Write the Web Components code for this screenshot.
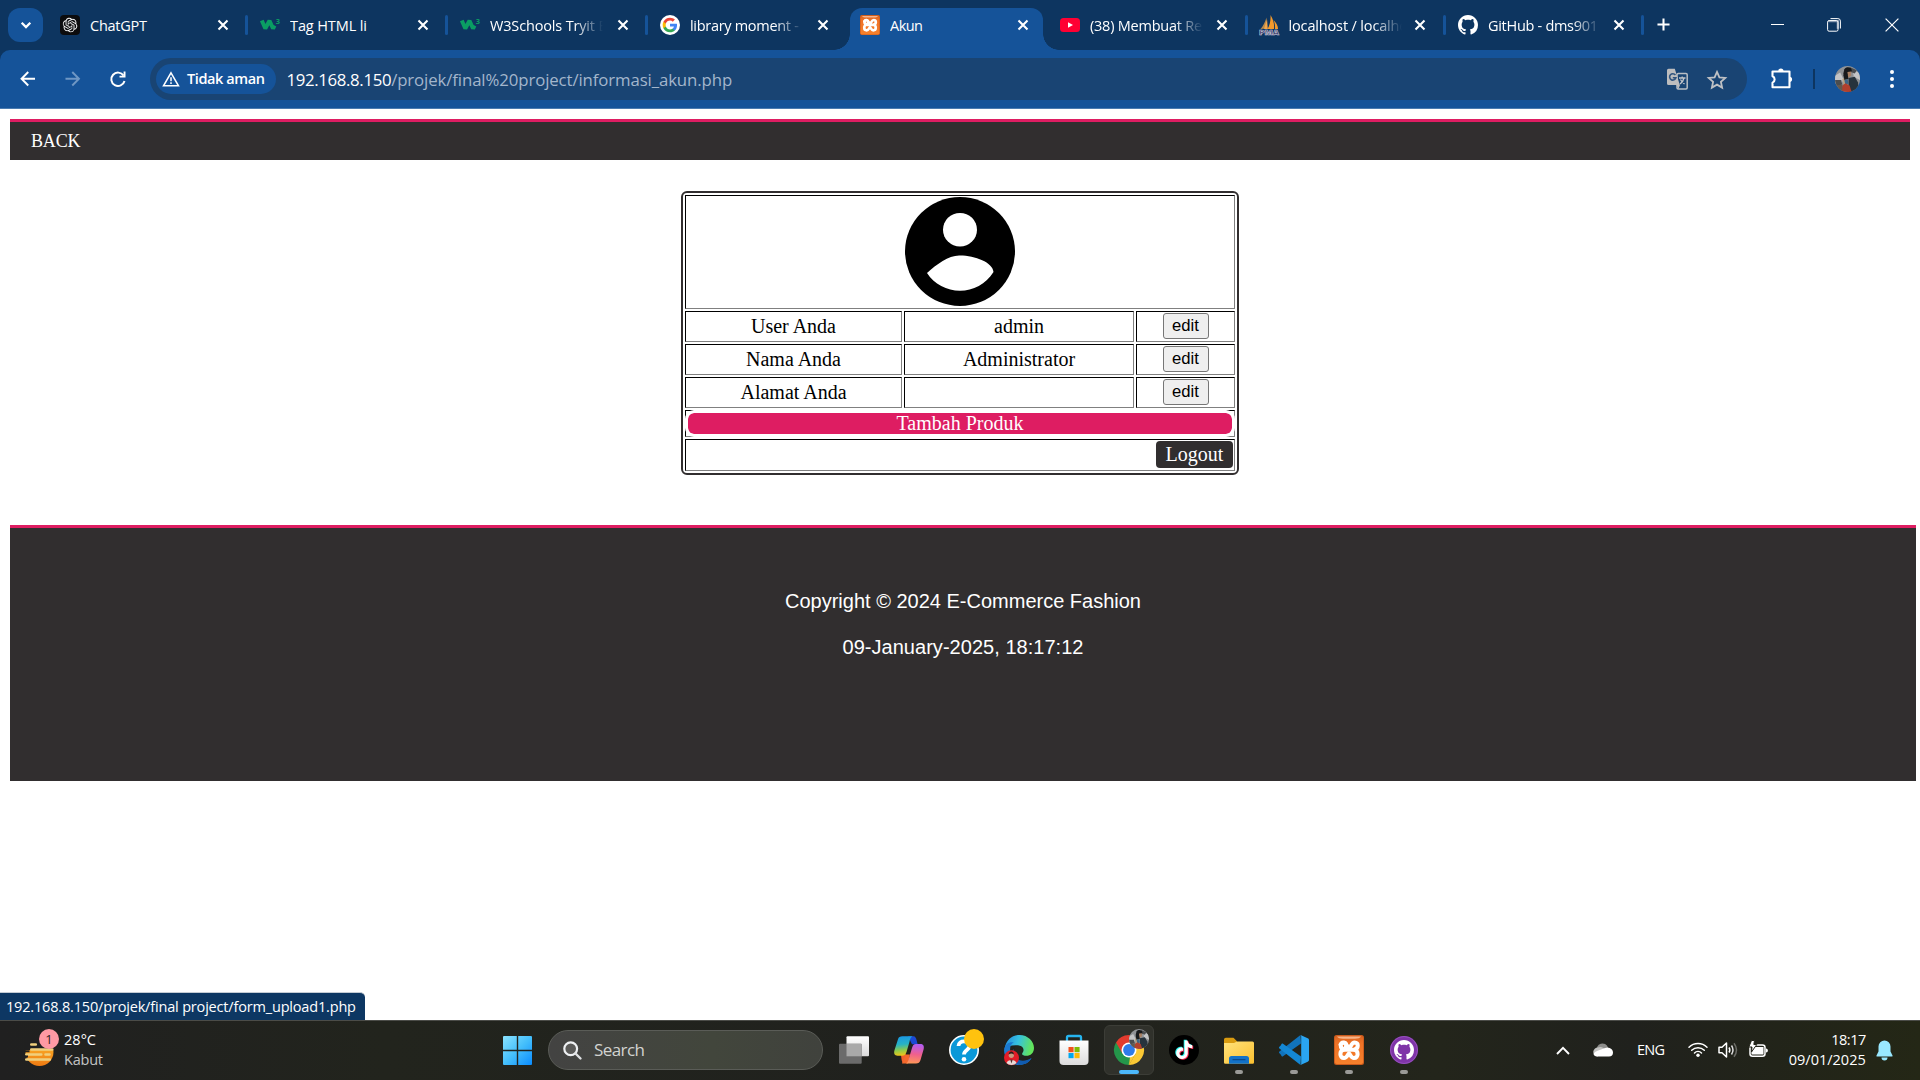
<!DOCTYPE html>
<html lang="id">
<head>
<meta charset="utf-8">
<title>Akun</title>
<style>
html,body{margin:0;height:100%;overflow:hidden;background:#fff}
body{font-family:"Open Sans","Noto Sans",sans-serif}
</style>
</head>
<body>
<desktop-screen></desktop-screen>
<script>
const GH='M8 0C3.58 0 0 3.58 0 8c0 3.54 2.29 6.53 5.47 7.59.4.07.55-.17.55-.38 0-.19-.01-.82-.01-1.49-2.01.37-2.53-.49-2.69-.94-.09-.23-.48-.94-.82-1.13-.28-.15-.68-.52-.01-.53.63-.01 1.08.58 1.23.82.72 1.21 1.87.87 2.33.66.07-.52.28-.87.51-1.07-1.78-.2-3.64-.89-3.64-3.95 0-.87.31-1.59.82-2.15-.08-.2-.36-1.02.08-2.12 0 0 .67-.21 2.2.82.64-.18 1.32-.27 2-.27s1.36.09 2 .27c1.53-1.04 2.2-.82 2.2-.82.44 1.1.16 1.92.08 2.12.51.56.82 1.27.82 2.15 0 3.07-1.87 3.75-3.65 3.95.29.25.54.73.54 1.48 0 1.07-.01 1.93-.01 2.2 0 .21.15.46.55.38A8.01 8.01 0 0016 8c0-4.42-3.58-8-8-8z';
const TT='M12.525.02c1.31-.02 2.61-.01 3.91-.02.08 1.53.63 3.09 1.75 4.17 1.12 1.11 2.7 1.62 4.24 1.79v4.03c-1.44-.05-2.89-.35-4.2-.97-.57-.26-1.1-.59-1.62-.93-.01 2.92.01 5.84-.02 8.75-.08 1.4-.54 2.79-1.35 3.94-1.31 1.92-3.58 3.17-5.91 3.21-1.43.08-2.86-.31-4.08-1.03-2.02-1.19-3.44-3.37-3.65-5.71-.02-.5-.03-1-.01-1.49.18-1.9 1.12-3.72 2.58-4.96 1.66-1.44 3.98-2.13 6.15-1.72.02 1.48-.04 2.96-.04 4.44-.99-.32-2.15-.23-3.02.37-.63.41-1.11 1.04-1.36 1.75-.21.51-.15 1.07-.14 1.61.24 1.64 1.82 3.02 3.5 2.87 1.12-.01 2.19-.66 2.77-1.61.19-.33.4-.67.41-1.06.1-1.79.06-3.57.07-5.36.01-4.03-.01-8.05.02-12.07z';
const OA='M22.2819 9.8211a5.9847 5.9847 0 0 0-.5157-4.9108 6.0462 6.0462 0 0 0-6.5098-2.9A6.0651 6.0651 0 0 0 4.9807 4.1818a5.9847 5.9847 0 0 0-3.9977 2.9 6.0462 6.0462 0 0 0 .7427 7.0966 5.98 5.98 0 0 0 .511 4.9107 6.051 6.051 0 0 0 6.5146 2.9001A5.9847 5.9847 0 0 0 13.2599 24a6.0557 6.0557 0 0 0 5.7718-4.2058 5.9894 5.9894 0 0 0 3.9977-2.9001 6.0557 6.0557 0 0 0-.7475-7.0729zm-9.022 12.6081a4.4755 4.4755 0 0 1-2.8764-1.0408l.1419-.0804 4.7783-2.7582a.7948.7948 0 0 0 .3927-.6813v-6.7369l2.02 1.1686a.071.071 0 0 1 .038.052v5.5826a4.504 4.504 0 0 1-4.4945 4.4944zm-9.6607-4.1254a4.4708 4.4708 0 0 1-.5346-3.0137l.142.0852 4.783 2.7582a.7712.7712 0 0 0 .7806 0l5.8428-3.3685v2.3324a.0804.0804 0 0 1-.0332.0615L9.74 19.9502a4.4992 4.4992 0 0 1-6.1408-1.6464zM2.3408 7.8956a4.485 4.485 0 0 1 2.3655-1.9728V11.6a.7664.7664 0 0 0 .3879.6765l5.8144 3.3543-2.0201 1.1685a.0757.0757 0 0 1-.071 0l-4.8303-2.7865A4.504 4.504 0 0 1 2.3408 7.872zm16.5963 3.8558L13.1038 8.364 15.1192 7.2a.0757.0757 0 0 1 .071 0l4.8303 2.7913a4.4944 4.4944 0 0 1-.6765 8.1042v-5.6772a.79.79 0 0 0-.407-.667zm2.0107-3.0231l-.142-.0852-4.7735-2.7818a.7759.7759 0 0 0-.7854 0L9.409 9.2297V6.8974a.0662.0662 0 0 1 .0284-.0615l4.8303-2.7866a4.4992 4.4992 0 0 1 6.6802 4.66zM8.3065 12.863l-2.02-1.1638a.0804.0804 0 0 1-.038-.0567V6.0742a4.4992 4.4992 0 0 1 7.3757-3.4537l-.142.0805L8.704 5.459a.7948.7948 0 0 0-.3927.6813zm1.0976-2.3654l2.602-1.4998 2.6069 1.4998v2.9994l-2.5974 1.4997-2.6067-1.4997Z';
const XAMPP=`<defs><linearGradient id="x" x2="0" y2="1"><stop offset="0" stop-color="#d9631f"/><stop offset=".25" stop-color="#ef7226"/><stop offset="1" stop-color="#f6812c"/></linearGradient></defs><rect width="30" height="30" rx="2.5" fill="#c95a1c"/><rect x=".9" y=".9" width="28.2" height="28.2" rx="2" fill="url(#x)"/><path d="M3 1.5h24c-1 1.600-3 2.200-6 2.200H9c-3 0-5-.6-6-2.200z" fill="#f6b48a"/><g fill="none" stroke="#fff" stroke-width="4" stroke-linecap="round" stroke-linejoin="round"><path d="M6.500 9.500C9 6.600 12.200 7.500 12.200 10.500c0 2.200-1.300 3.200-2.700 4.200-4 1-4.500 8.300.6 8.300 2.700 0 2.900-2.500 4.900-4.700 2 2.200 2.200 4.700 4.900 4.700 5.100 0 4.600-7.300.6-8.300"/><path d="M10 14.700C5.500 13 6 7.300 9.500 7.500c3.200 0 3.700 5.300 5.500 5.300s2.300-5.300 5.500-5.300c4.500.2 4.200 5.800 0 7.200z"/></g>`;
const face=`<clipPath id="f"><circle cx="12" cy="12" r="12"/></clipPath><g clip-path="url(#f)"><rect width="24" height="24" fill="#8f9296"/><path d="M0 9l5-3 3 6-2 5-6 1zM17 3l7 4v6l-6-3z" fill="#c3c4c6"/><path d="M0 13h6l1 4-7 2zM14 1l7 3-2 3-5-2z" fill="#4a4d50"/><path d="M13 11l6-1 3 5 1 6-5 3h-5z" fill="#26333d"/><path d="M7 12l4-2 1 6-3 4z" fill="#b9a27f"/><path d="M9 3c2-3 7-2 7 1l-1 3-6 4-1-4z" fill="#17191c"/><path d="M12 5.500l3.500-.5v4L12 11z" fill="#a98063"/><path d="M8 8l4-1 1 5-4 1z" fill="#171a1d"/><path d="M9 13l3-1 1 4-3 2z" fill="#3a6688"/><path d="M7 18l3-2 4 2 2 6H6z" fill="#b0402d"/><path d="M1 18l6-1v7H2z" fill="#65594d"/></g>`;
/* name: [viewBox, markup] */
const ICONS={
down:['0 0 12 8','<path d="M1.700 1.700L6 6l4.300-4.300" fill="none" stroke="#fff" stroke-width="2.300"/>'],
close:['0 0 12 12','<path d="M1.500 1.500l9 9M10.500 1.500l-9 9" stroke="#fff" stroke-width="2.100"/>'],
gpt:['0 0 20 20',`<rect width="20" height="20" rx="4" fill="#0c0c0d"/><path transform="translate(2.700 2.700) scale(.61)" fill="#f5f5f5" d="${OA}"/>`],
w3:['0 0 20 20','<path d="M1.800 5.500l3.500 8 4.200-7.800 3.500 7.800 1.500-3" fill="none" stroke="#0a9d63" stroke-width="4" stroke-linejoin="miter" stroke-miterlimit="2"/><text x="15.800" y="9" font-family="Open Sans,sans-serif" font-weight="700" font-size="7.500" fill="#0a9d63">3</text>'],
google:['0 0 20 20','<circle cx="10" cy="10" r="10" fill="#fff"/><g transform="translate(2 2) scale(.667)"><path fill="#4285f4" d="M22.560 12.250c0-.78-.07-1.530-.2-2.250H12v4.260h5.920c-.26 1.370-1.040 2.530-2.210 3.310v2.770h3.570c2.080-1.920 3.280-4.740 3.280-8.090z"/><path fill="#34a853" d="M12 23c2.970 0 5.460-.98 7.280-2.660l-3.570-2.770c-.98.66-2.230 1.060-3.710 1.060-2.860 0-5.290-1.930-6.160-4.530H2.180v2.840C3.990 20.530 7.700 23 12 23z"/><path fill="#fbbc05" d="M5.840 14.090c-.22-.66-.35-1.360-.35-2.090s.13-1.430.35-2.090V7.070H2.180C1.430 8.550 1 10.220 1 12s.43 3.450 1.180 4.930z"/><path fill="#ea4335" d="M12 5.380c1.620 0 3.060.56 4.210 1.640l3.150-3.150C17.450 2.090 14.970 1 12 1 7.700 1 3.990 3.470 2.180 7.070l3.660 2.840C6.710 7.310 9.140 5.380 12 5.380z"/></g>'],
xampp:['0 0 30 30',XAMPP],
yt:['0 0 20 20','<rect y="3" width="20" height="14" rx="3.500" fill="#f03"/><path d="M8 7.200v5.600l5-2.800z" fill="#fff"/>'],
pma:['0 0 20 20','<path d="M7.500 2.500v11L1.500 14c2.500-3 4.500-6.500 6-11.500z" fill="#b98a4c"/><path d="M11.500 0c3 5 4 9 3.500 14H8.500c2.500-4 3.300-9 3-14zM14.500 5c3 3 4.500 6 4.500 9h-3c.3-3-.3-6-1.500-9z" fill="#f39a2c"/><path d="M8 4l.8 10H5z" fill="#f3a749"/><text x="0" y="20" textLength="20" lengthAdjust="spacingAndGlyphs" font-family="Open Sans,sans-serif" font-weight="800" font-size="7.500" fill="#353a63" stroke="#dcd8e4" stroke-width=".5">PMA</text>'],
github:['0 0 16 16',`<path fill="#fff" d="${GH}"/>`],
plus:['0 0 14 14','<path d="M7 .5v13M.5 7h13" stroke="#fff" stroke-width="2.200"/>'],
min:['0 0 13 13','<path d="M0 6.500h13" stroke="#fff" stroke-width="1"/>'],
restore:['0 0 14 14','<path d="M1.500 3.200h9.300v7.500" fill="none" stroke="#8093ad" stroke-width="2.200"/><rect x=".6" y="2.600" width="10.400" height="10.600" rx="1.500" fill="none" stroke="#fff" stroke-width="1"/><path d="M3.500.6h7.400a2.500 2.500 0 012.500 2.500v7.400" fill="none" stroke="#fff" stroke-width="1"/>'],
wclose:['0 0 14 14','<path d="M.6.6l12.800 12.800M13.400.6L.6 13.400" stroke="#fff" stroke-width="1.200"/>'],
back:['0 0 16 16','<path d="M15.500 8H2M8.500 1L1.600 8l6.900 7" fill="none" stroke="#fff" stroke-width="2"/>'],
fwd:['0 0 16 16','<path d="M.5 8H14M7.500 1l6.900 7-6.900 7" fill="none" stroke="#6f97c4" stroke-width="2"/>'],
reload:['0 0 16 16','<path d="M13.600 4.600A6.700 6.700 0 1014.500 10" fill="none" stroke="#fff" stroke-width="2"/><path d="M15.500.6v6H9.500V4.700h4.100V.6z" fill="#fff"/>'],
warn:['0 0 18 16','<path d="M9 1.800L16.500 14.800h-15z" fill="none" stroke="#fff" stroke-width="1.500"/><path d="M9 6.200v4M9 11.300v1.700" stroke="#fff" stroke-width="1.500"/>'],
trans:['0 0 21 22','<rect x="10" y="5.500" width="10.200" height="15.500" rx="1.200" fill="none" stroke="#b9bec5" stroke-width="1.500"/><path d="M1.500.7h6.300l5 16.300H1.500A1.500 1.500 0 010 15.500V2.200A1.500 1.500 0 011.500.7z" fill="#bdbdbe"/><path d="M9.500 17h3.500l-1.500 4z" fill="#bdbdbe"/><path d="M8.400 7A3.200 3.200 0 108.900 9.800H5.800" fill="none" stroke="#31557f" stroke-width="1.600"/><path d="M12 10h6.500M15.200 8.500V10M17 10c-.5 2.500-2 4.500-4 6M13.500 11.500c1 2 2.500 3.500 4 4.500" fill="none" stroke="#c3c6ca" stroke-width="1.300"/>'],
star:['0 0 20 19','<path d="M10 1.900l2.400 5.400 5.900.6-4.400 3.900 1.200 5.800-5.100-3-5.100 3 1.200-5.800L1.700 7.900l5.900-.6z" fill="none" stroke="#bfc1c4" stroke-width="1.800"/>'],
puzzle:['0 0 21 21','<path d="M1.500 3.500h17v15.800h-17v-4.700a3.400 3.400 0 000-6.300z" fill="none" stroke="#fff" stroke-width="2.100" stroke-linejoin="round"/><path d="M7.300 3a2.600 2.600 0 015.200 0zM18.500 8.700a2.600 2.600 0 010 5.200z" fill="#fff"/>'],
dots:['0 0 4 18','<circle cx="2" cy="2" r="2" fill="#fff"/><circle cx="2" cy="9" r="2" fill="#fff"/><circle cx="2" cy="16" r="2" fill="#fff"/>'],
face:['0 0 24 24',face],
person:['0 0 110 109','<ellipse cx="55" cy="54.500" rx="55" ry="54.500"/><ellipse cx="55" cy="32.700" rx="17" ry="16.800" fill="#fff"/><path d="M22 76c10-9 22-18 33-17.500 15 0 33 7 33.500 16.500C81 87 68 93.800 55 93.800S29 87 22 76z" fill="#fff"/>'],
weather:['0 0 30 24','<defs><linearGradient id="w" x2="0" y2="1"><stop offset="0" stop-color="#ffc02e"/><stop offset="1" stop-color="#ee7a12"/></linearGradient></defs><circle cx="14.500" cy="9" r="14" fill="url(#w)"/><path d="M0 -6h30v13H0z" fill="#202020"/><path d="M6.300 1.500h4.500M6.300 6.500h21M1.300 11.500h15M20.500 11.500h4M1.300 16.500h23.500" stroke="#f0cf7d" stroke-width="2.600" stroke-linecap="round"/><path d="M0 8.200h4.500M0 13.500h3M0 19h2" stroke="#202020" stroke-width="2"/>'],
win:['0 0 29 29','<defs><linearGradient id="g" x2="1" y2="1"><stop offset="0" stop-color="#8be3ff"/><stop offset=".5" stop-color="#45bffb"/><stop offset="1" stop-color="#0a8cff"/></linearGradient></defs><path d="M1 0h12.800v13.800H0V1a1 1 0 011-1zM15.200 0H28a1 1 0 011 1v12.800H15.200zM0 15.200h13.800V29H1a1 1 0 01-1-1zM15.200 15.200H29V28a1 1 0 01-1 1H15.200z" fill="url(#g)"/>'],
search:['0 0 19 19','<circle cx="7.700" cy="7.700" r="6.400" fill="#5a5a58" stroke="#eef0f2" stroke-width="2.200"/><path d="M12.500 12.500l5 5" stroke="#dfe1e3" stroke-width="2.400" stroke-linecap="round"/>'],
task:['0 0 30 28','<defs><linearGradient id="t" x2="0" y2="1"><stop offset="0" stop-color="#fff"/><stop offset="1" stop-color="#dadada"/></linearGradient></defs><rect x="7.500" y=".3" width="22.500" height="20" rx="1" fill="url(#t)"/><rect x="0" y="7.800" width="22.700" height="20" rx="1" fill="#6b6b6b"/><path d="M7.500 7.800h15.200v12.500H7.500z" fill="#a9a9a9"/>'],
copilot:['0 0 30 28','<defs><linearGradient id="a" x2=".1" y2="1"><stop offset="0" stop-color="#1996e8"/><stop offset=".45" stop-color="#27b3c5"/><stop offset=".75" stop-color="#8ecb4a"/><stop offset="1" stop-color="#e8c51c"/></linearGradient><linearGradient id="b" x1=".3" x2=".2" y2="1"><stop offset="0" stop-color="#b45cf0"/><stop offset=".5" stop-color="#f0608d"/><stop offset="1" stop-color="#ff9a55"/></linearGradient></defs><path d="M8 27.500l2-9h6l-2 9z" fill="#f4682c"/><path d="M7 19l5-1.200-3.500 8.700C7.600 25 7.300 21 7 19z" fill="#f2612c"/><path d="M14 .3h5.500c3.500 0 3.200 7.200 4.500 8h-6z" fill="#1b49d4"/><path d="M8.500.3h10c-2 1-2.500 3.200-3 5.500L12.500 16c-1 3-2 3.700-4.500 3.700H3.500C.5 19.700-.3 17.500.4 14.500L4 3.200C4.600 1.200 6 .3 8.500.3z" fill="url(#a)"/><path d="M22 8h4.500c3 0 3.800 2.300 3.200 5L26.500 24c-.6 2.300-2.200 3.600-4.500 3.600H12c1.700-1 2.200-3 3-5.600l3-10C18.900 9.300 19.500 8 22 8z" fill="url(#b)"/>'],
help:['0 0 30 30','<circle cx="15" cy="15" r="14.200" fill="#0a98d8" stroke="#fff" stroke-width="1.600"/><path d="M9.500 11C9.500 4.500 20.500 5 20.500 11c0 4-5.500 4-5.500 8.500" fill="none" stroke="#fff" stroke-width="3.800"/><circle cx="15" cy="24.300" r="2.300" fill="#fff"/>'],
edge:['0 0 30 30','<defs><linearGradient id="e" x2="1" y2=".2"><stop offset="0" stop-color="#2385dd"/><stop offset=".5" stop-color="#35c1e0"/><stop offset="1" stop-color="#62e45c"/></linearGradient><linearGradient id="h" x2="1"><stop offset="0" stop-color="#1260b4"/><stop offset="1" stop-color="#0f58ad"/></linearGradient></defs><path d="M.5 14C2 5 8 0 15.500 0 24 0 30 6.500 30 13c0 5-3.500 7.800-7.700 7.800-4 0-5-1.600-3.600-3.200 2-3 .5-6.600-4-7.200C8 9.300 3 12 .5 14z" fill="url(#e)"/><path d="M0 15c1-6 5-8.600 9.800-7.700C5 9.500 5 18 9 22c5 6 13 5.500 18.500 1C25 28 19.500 30 15 30 7 30 0 23.500 0 15z" fill="#1a78cf"/><path d="M10 14c-3 9 7 15.500 17.500 9C25 28 19.500 30 15 30 7 28 6 17 10 14z" fill="url(#h)"/><path d="M11 12c4-3 8 0 7.500 4-2 2-1 4.500 2.500 5-7 2-12-4-10-9z" fill="#22271f"/><circle cx="7.500" cy="22.700" r="7.500" fill="#e21c27"/><circle cx="7.300" cy="20.300" r="2.600" fill="#c99980"/><path d="M4.700 19.500c0-4 5.200-4 5.200 0-2-1.500-3.200-1.500-5.200 0z" fill="#2b1b18"/><path d="M2.500 28c1-4 9-4 10 0-2.500 2.500-7.500 2.500-10 0z" fill="#e4dad8"/><path d="M6.200 24.500h2.500l-1.200 4z" fill="#5b3431"/>'],
store:['0 0 30 30','<path d="M8 7V2.500C8 1.500 8.500 1 9.500 1h11c1 0 1.500.5 1.500 1.500V7" fill="none" stroke="#26b4ef" stroke-width="2.300"/><defs><linearGradient id="s" x2="0" y2="1"><stop offset="0" stop-color="#fff"/><stop offset="1" stop-color="#dcdcdc"/></linearGradient></defs><path d="M.5 5.500h29V26a4 4 0 01-4 4h-21a4 4 0 01-4-4z" fill="url(#s)"/><path d="M8 5.400h14v1.600H8z" fill="#26b4ef" opacity="0"/><path d="M9.500 12H14.600v5.200H9.500z" fill="#f1511b"/><path d="M15.500 12h5.100v5.200h-5.100z" fill="#80bb03"/><path d="M9.500 18H14.600v5.200H9.500z" fill="#00a8ee"/><path d="M15.500 18h5.100v5.200h-5.100z" fill="#fdba08"/>'],
chrome:['0 0 30 30','<path d="M15 15L2 7.500A15 15 0 0128 7.500z" fill="#e33b2e"/><path d="M15 15L15 30A15 15 0 012 7.500z" fill="#24964a"/><path d="M8.500 18.800L2 7.500l7-1z" fill="#e33b2e"/><path d="M15 15L28 7.500A15 15 0 0115 30l6.500-11.300z" fill="#fcc934"/><path d="M21.500 18.700L15 30l-3-8z" fill="#fcc934"/><path d="M8.500 18.800L15 30l3-8z" fill="#24964a"/><path d="M21.500 18.700L15 30l1-8z" fill="#fcc934"/><circle cx="15" cy="15" r="7.500" fill="#fff"/><circle cx="15" cy="15" r="5.900" fill="#2f7be9"/>'],
tiktok:['0 0 30 30',`<circle cx="15" cy="15" r="15" fill="#000"/><g transform="translate(6 5.500) scale(.77)"><path transform="translate(-1.200 -1)" fill="#25f4ee" d="${TT}"/><path transform="translate(1.200 1)" fill="#fe2c55" d="${TT}"/><path fill="#fff" d="${TT}"/></g>`],
folder:['0 0 30 30','<path d="M0 4.500A1.800 1.800 0 011.800 2.700H9.500l3.500 3.500h0v4H0z" fill="#d99b10"/><defs><linearGradient id="o" x2="1" y2="1"><stop offset="0" stop-color="#ffe27c"/><stop offset="1" stop-color="#fbc02f"/></linearGradient></defs><path d="M0 8h10l3-1.500h15.500A1.500 1.500 0 0130 8v19.500a1.300 1.300 0 01-1.300 1.300H1.300A1.300 1.300 0 010 27.500z" fill="url(#o)"/><path d="M5 28.800v-5.300a2.500 2.500 0 012.500-2.500h15a2.500 2.500 0 012.500 2.500v5.300z" fill="#1272c8"/><path d="M9 24.700h12" stroke="#0a4a8c" stroke-width="1.200" stroke-linecap="round"/>'],
vscode:['0 0 30 30','<path d="M1.500 19.200L.4 18.200c-.6-.6-.6-1.200 0-1.700L21.500 0 22 8.500 4 21.300c-.5.300-1 .2-1.300-.1z" fill="#1173bb"/><path d="M1.500 10.800L.4 11.800c-.6.6-.6 1.200 0 1.700L21.500 30 22 21.500 4 8.700c-.5-.3-1-.2-1.300.1z" fill="#1487d4"/><path d="M21.500 0l7.200 3.300c.9.400 1.300 1 1.300 1.900v19.600c0 .9-.4 1.500-1.300 1.900L21.500 30c.6-.4.700-1 .7-1.700V1.700c0-.7-.1-1.300-.7-1.700z" fill="#2aa5f2"/>'],
ghd:['0 0 30 30',`<circle cx="15" cy="15" r="14" fill="#7f34a8"/><circle cx="15" cy="15" r="13.500" fill="none" stroke="#9550bb"/><g transform="translate(5 5) scale(1.250)"><path fill="#fff" d="${GH}"/></g>`],
up:['0 0 14 9','<path d="M1 8l6-6.200L13 8" fill="none" stroke="#fff" stroke-width="1.900"/>'],
cloud:['0 0 20 14','<path d="M4 8a5.600 5.600 0 0111-3.500L11 9z" fill="#8d8d8b"/><path d="M5 4.500C8 3 11 5 13 7.500L4.500 13.500a4.200 4.200 0 01.5-9z" fill="#c4c4c2"/><path d="M.5 11.200C1.500 8.800 3 8 6 7.200c3-.8 5-2.200 8.500-2.700 3 .2 5.500 2 5.500 5A4 4 0 0116 13.500H4a3.900 3.900 0 01-3.500-2.300z" fill="#fff"/>'],
wifi:['0 0 20 15','<g fill="none" stroke="#fff" stroke-width="1.500" stroke-linecap="round"><path d="M1 5.300a12.800 12.800 0 0118 0M3.700 8.200a9 9 0 0112.600 0M6.500 11a5 5 0 017 0"/></g><circle cx="10" cy="13.200" r="1.700" fill="#fff"/>'],
sound:['0 0 20 18','<path d="M1 6.300h3L8.500 2v14L4 11.700H1z" fill="none" stroke="#fff" stroke-width="1.500" stroke-linejoin="round"/><path d="M11 6.500q1.700 2.500 0 5" fill="none" stroke="#fff" stroke-width="1.500"/><path d="M13.500 4.500q3 4.500 0 9" fill="none" stroke="#ddd" stroke-width="1.500"/><path d="M16 2.200q5 6.800 0 13.600" fill="none" stroke="#6b6c66" stroke-width="1.500"/>'],
battery:['0 0 20 18','<rect x="2" y="5" width="15" height="11.300" rx="2.500" fill="none" stroke="#fff" stroke-width="1.500"/><path d="M18 8.500c2.500 0 2.500 4 0 4z" fill="#fff"/><path d="M7 7h8.500v7.500h-12V11z" fill="#fff"/><path d="M3.500.5h3L5.800 4.500h3L3.500 12l.5-5H.8z" fill="#fff" stroke="#222319" stroke-width="1"/>'],
bell:['0 0 17 20','<path d="M8.500.5a6 6 0 016 6v5L16.500 15.500c.2.600 0 1-.7 1H1.200c-.7 0-.9-.4-.7-1L2.500 11.500v-5a6 6 0 016-6z" fill="#99e8ff"/><path d="M5.500 17.500h6a3 3 0 01-6 0z" fill="#99e8ff"/>']
};
const define=(name,html,setup)=>customElements.define(name,class extends HTMLElement{
  connectedCallback(){
    if(this.shadowRoot)return;
    const root=this.attachShadow({mode:'open'});
    const t=document.createElement('template');
    t.innerHTML=typeof html==='function'?html(this):html;
    root.append(t.content.cloneNode(true));
    if(setup)setup(this,root);
  }
});
/* Vector icon: name, w, h */
define('ui-icon',e=>{
  const [vb,m]=ICONS[e.getAttribute('name')];
  const w=e.getAttribute('w'),h=e.getAttribute('h')||w;
  return `<style>:host{display:block;flex:none;width:${w}px;height:${h}px}svg{display:block;overflow:visible}</style><svg width="${w}" height="${h}" viewBox="${vb}" preserveAspectRatio="none">${m}</svg>`;
});
/* Text run spaced so that its sample (or whole text) spans w pixels */
define('fit-text',`<style>:host{display:block;white-space:pre;flex:none}</style><slot></slot>`,e=>{
  const s=e.getAttribute('sample')||e.textContent,w=+e.getAttribute('w'),c=getComputedStyle(e);
  const x=document.createElement('canvas').getContext('2d');
  x.font=`${c.fontWeight} ${c.fontSize} ${c.fontFamily}`;
  e.style.letterSpacing=((w-x.measureText(s).width)/(s.length-1)).toFixed(3)+'px';
});
define('browser-tab',e=>{
  const a=e.hasAttribute('active');
  return `<style>
  :host{display:flex;flex:none;width:${e.getAttribute('width')||200}px;height:50px;align-items:flex-end}
  .in{position:relative;display:flex;align-items:center;width:${a?192.500:195}px;height:42px;padding:0 0 8px 10px;box-sizing:border-box;border-radius:12px 12px 0 0;${a?'background:#155399':''}}
  .lab{flex:none;width:114px;margin-left:10px;margin-right:${e.getAttribute('gap')||12.500}px;overflow:hidden;color:#fff;font-size:14.500px;line-height:20px;height:20px;margin-top:2px;${e.hasAttribute('fade')?'-webkit-mask:linear-gradient(90deg,#000 84px,transparent 113px)':''}}
  .sep{flex:none;width:3px;height:20px;border-radius:1.500px;background:#155399;margin-bottom:15px;margin-left:${+(e.getAttribute('sepx')||0)}px}
  .fl{position:absolute;bottom:0;width:16px;height:16px}
  .l{left:-16px;background:radial-gradient(circle at 0 0,transparent 15.500px,#155399 16px)}
  .r{right:-16px;background:radial-gradient(circle at 100% 0,transparent 15.500px,#155399 16px)}
  </style><div class="in">${a?'<i class="fl l"></i><i class="fl r"></i>':''}<ui-icon name="${e.getAttribute('icon')}" w="20"></ui-icon><div class="lab"><slot></slot></div><ui-icon class="c" name="close" w="12"></ui-icon></div>${e.hasAttribute('nosep')?'':'<div class="sep"></div>'}`;
});
define('tab-strip',`<style>
:host{display:flex;height:50px;background:#0d3560;padding-left:8px;align-items:flex-start}
.dd{width:35px;height:34px;border-radius:12px;background:#155399;margin:8px 7px 0 0;display:flex;align-items:center;justify-content:center;flex:none}
.win{display:flex;align-items:center;height:49px;flex:1;padding-left:13px}
</style>
<div class="dd"><ui-icon name="down" w="12" h="8"></ui-icon></div>
<browser-tab icon="gpt"><fit-text w="57">ChatGPT</fit-text></browser-tab>
<browser-tab icon="w3"><fit-text w="77">Tag HTML li</fit-text></browser-tab>
<browser-tab icon="w3" fade><fit-text w="105" sample="W3Schools Tryit">W3Schools Tryit E</fit-text></browser-tab>
<browser-tab icon="google" fade nosep><fit-text w="101" sample="library moment">library moment - G</fit-text></browser-tab>
<browser-tab icon="xampp" active nosep><fit-text w="33">Akun</fit-text></browser-tab>
<browser-tab icon="yt" fade width="198.500" gap="11.500"><fit-text w="92" sample="(38) Membuat">(38) Membuat Re</fit-text></browser-tab>
<browser-tab icon="pma" fade width="199.500" gap="11.500" sepx="-1"><fit-text w="111" sample="localhost / localh">localhost / localho</fit-text></browser-tab>
<browser-tab icon="github" fade width="196" gap="10.500" sepx="-1"><fit-text w="110" sample="GitHub - dms901">GitHub - dms901</fit-text></browser-tab>
<div class="win"><ui-icon name="plus" w="13"></ui-icon><ui-icon name="min" w="13" style="margin-left:101px"></ui-icon><ui-icon name="restore" w="14" style="margin-left:42.500px"></ui-icon><ui-icon name="wclose" w="14" style="margin-left:44px"></ui-icon></div>`);
define('tool-bar',`<style>
:host{display:block;background:#0d3560;height:59px}
.bar{box-sizing:border-box;height:59px;background:#155399;border-bottom:1px solid #4a7bb0;border-radius:10px 10px 0 0;display:flex;align-items:center;padding-left:20px}
.omni{box-sizing:border-box;margin-left:24.500px;width:1597px;height:42px;border-radius:21px;background:#194473;display:flex;align-items:center;padding:0 20px 0 6px}
.chip{box-sizing:border-box;width:120px;height:30px;border-radius:15px;background:#155399;display:flex;align-items:center;padding-left:6px;color:#fff;font-size:14.500px;font-weight:600}
.url{display:flex;margin-left:10.500px;flex:1;color:#a3b6cc;font-size:16.800px;line-height:24px;padding-top:1px}
.host{color:#fff}
.sep{width:2px;height:20px;background:#0d3560;margin:0 20px 0 21px}
</style><div class="bar"><ui-icon name="back" w="15.500"></ui-icon><ui-icon name="fwd" w="15.500" style="margin-left:29px"></ui-icon><ui-icon name="reload" w="16" style="margin-left:29.500px"></ui-icon>
<div class="omni"><div class="chip"><ui-icon name="warn" w="18" h="16"></ui-icon><fit-text w="78" style="margin:-1px 0 0 7px">Tidak aman</fit-text></div>
<div class="url"><fit-text class="host" w="105">192.168.8.150</fit-text><fit-text w="341">/projek/final%20project/informasi_akun.php</fit-text></div>
<ui-icon name="trans" w="21" h="22"></ui-icon><ui-icon name="star" w="20" h="19" style="margin-left:19px"></ui-icon></div>
<ui-icon name="puzzle" w="21" style="margin:-1px 0 0 23.500px"></ui-icon><div class="sep"></div><ui-icon name="face" w="25" h="26"></ui-icon><ui-icon name="dots" w="4" h="18" style="margin-left:30px"></ui-icon></div>`);
define('info-cell',`<style>:host{box-sizing:border-box;display:flex;align-items:center;justify-content:center;border:1px solid;border-color:#000 #808080 #808080 #000;line-height:22px;padding-bottom:2px}</style><slot></slot>`);
define('edit-button',`<style>:host{box-sizing:border-box;display:block;width:46px;height:26px;border:1px solid #767676;border-radius:3px;background:#efefef;font:16.667px/23px "Liberation Sans",Arial,sans-serif;text-align:center}</style><slot>edit</slot>`);
define('account-table',`<style>
:host{box-sizing:border-box;display:grid;width:558px;height:284px;margin:0 auto;border:2px solid #312e2f;border-radius:6px;padding:2px;gap:2px;grid-template-columns:217px 230px 99px;grid-template-rows:114px 31px 31px 31px 27px 32px}
.all{grid-column:1/-1;padding:0}
.add{align-items:stretch}
.add a{box-sizing:border-box;flex:1;margin:-1px;border:3px solid #fff;border-radius:9px;background:#de1d62;background-clip:padding-box;color:#fff;text-align:center;line-height:21px}
.out{justify-content:flex-end}
.out a{background:#312e2f;color:#fff;border-radius:4px;width:77px;height:27px;line-height:26px;text-align:center;margin:-2px 1px 0 0}
</style>
<info-cell class="all"><ui-icon name="person" w="110" h="109" style="margin-top:-1px"></ui-icon></info-cell>
<info-cell>User Anda</info-cell><info-cell>admin</info-cell><info-cell><edit-button></edit-button></info-cell>
<info-cell>Nama Anda</info-cell><info-cell>Administrator</info-cell><info-cell><edit-button></edit-button></info-cell>
<info-cell>Alamat Anda</info-cell><info-cell></info-cell><info-cell><edit-button></edit-button></info-cell>
<info-cell class="all add"><a>Tambah Produk</a></info-cell>
<info-cell class="all out"><a>Logout</a></info-cell>`);
define('account-page',`<style>
:host{display:block;flex:1;min-height:0;background:#fff;font:20px/24px "Liberation Serif","Times New Roman",serif;color:#000;padding-top:10px}
nav{box-sizing:border-box;height:41px;margin:0 10px 31px;background:#312e2f;border-top:3px solid #de1d62;color:#fff;padding:7px 0 0 21px;font-size:18px}
footer{box-sizing:border-box;width:1906px;height:256px;margin:50px 0 0 10px;background:#312e2f;border-top:3px solid #de1d62;color:#fff;font:20px/23px "Liberation Sans",Arial,sans-serif;text-align:center;padding-top:62px}
p{margin:0 0 23px;display:flex;justify-content:center}
</style>
<nav><fit-text w="49.500">BACK</fit-text></nav><account-table></account-table>
<footer><p><fit-text w="356">Copyright © 2024 E-Commerce Fashion</fit-text></p><p><fit-text w="241">09-January-2025, 18:17:12</fit-text></p></footer>`);
define('link-status',`<style>:host{position:absolute;left:0;bottom:60px;box-sizing:border-box;width:365px;height:28px;background:#0d3763;border-top:1px solid #c5ccd4;border-radius:0 5px 0 0;color:#fff;font-size:14.500px;line-height:28px;padding-left:6px}</style><fit-text w="350">192.168.8.150/projek/final project/form_upload1.php</fit-text>`);
define('task-app',e=>`<style>
:host{display:flex;flex:none;width:55px;height:60px;align-items:center;justify-content:center;position:relative}
.box{box-sizing:border-box;width:50px;height:50px;border-radius:6px;display:flex;align-items:center;justify-content:center;${e.hasAttribute('active')?'background:#30312b;border:1px solid #3c3d37':''}}
.run{position:absolute;bottom:6px;left:50%;transform:translateX(-50%);height:4px;border-radius:2px;width:${e.hasAttribute('active')?20:8}px;background:${e.hasAttribute('active')?'#4cb8fa':'#9a9a97'}}
</style><div class="box"><ui-icon name="${e.getAttribute('icon')}" w="${e.getAttribute('w')||30}" h="${e.getAttribute('h')||30}"></ui-icon></div>${e.hasAttribute('run')?'<div class="run"></div>':''}<slot></slot>`);
define('task-bar',`<style>
:host{box-sizing:border-box;display:flex;height:60px;background:linear-gradient(90deg,#202020,#22241d 20%,#20211e 50%,#23251b 75%,#20211d 85%,#242716);box-shadow:inset 0 1px #4b4c48;align-items:center;position:relative;color:#fff;font-size:14.500px;line-height:20px}
.weather{display:flex;align-items:center;width:478px;padding-left:25px;position:relative;box-sizing:border-box}
.badge{position:absolute;left:39px;top:-2px;width:20px;height:20px;border-radius:50%;background:#ff99a4;color:#332224;text-align:center;font-size:13px;line-height:21px}
.search{box-sizing:border-box;width:275px;height:40px;border-radius:20px;background:linear-gradient(90deg,#434342,#42463c 60%,#40423d);border:1px solid #5a5c57;display:flex;align-items:center;padding-left:14px;margin:0 3px 0 16px;color:#d2d3d0;font-size:17px}
.tray{display:flex;align-items:center;flex:1;padding-left:125px}
.clock{display:flex;flex-direction:column;align-items:flex-end;width:78px;margin:-1px 0 0 20px}
</style>
<div class="weather"><ui-icon name="weather" w="30" h="24" style="margin-top:9px"></ui-icon><div style="margin:-1px 0 0 9px"><fit-text w="32">28°C</fit-text><fit-text w="39" style="color:#c4c4c4">Kabut</fit-text></div><span class="badge">1</span></div>
<div style="padding:1px 0 0 25px"><ui-icon name="win" w="29"></ui-icon></div>
<div class="search"><ui-icon name="search" w="19"></ui-icon><fit-text w="51" style="margin-left:12px">Search</fit-text></div>
<task-app icon="task" h="28"></task-app><task-app icon="copilot" h="28"></task-app>
<task-app icon="help"><span style="position:absolute;border-radius:50%;left:28px;top:9px;width:20px;height:20px;background:#ffc20e"></span></task-app>
<task-app icon="edge"></task-app><task-app icon="store"></task-app>
<task-app icon="chrome" active run><ui-icon name="face" w="20" style="position:absolute;left:28px;top:9px"></ui-icon></task-app>
<task-app icon="tiktok"></task-app><task-app icon="folder" run></task-app><task-app icon="vscode" run></task-app><task-app icon="xampp" run></task-app><task-app icon="ghd" run></task-app>
<div class="tray"><ui-icon name="up" w="14" h="9"></ui-icon><ui-icon name="cloud" w="20" h="14" style="margin-left:23px"></ui-icon><fit-text w="28" style="margin-left:24px">ENG</fit-text><ui-icon name="wifi" w="20" h="15" style="margin:-2px 0 0 23.500px"></ui-icon><ui-icon name="sound" w="20" h="18" style="margin-left:10px"></ui-icon><ui-icon name="battery" w="20" h="18" style="margin:-2px 0 0 10px"></ui-icon>
<div class="clock"><fit-text w="35">18:17</fit-text><fit-text w="77">09/01/2025</fit-text></div><ui-icon name="bell" w="17" h="20" style="margin-left:10.500px"></ui-icon></div>`);
define('desktop-screen',`<style>:host{position:relative;display:flex;flex-direction:column;width:1920px;height:1080px;overflow:hidden}</style><tab-strip></tab-strip><tool-bar></tool-bar><account-page></account-page><task-bar></task-bar><link-status></link-status>`);
</script>
</body>
</html>
